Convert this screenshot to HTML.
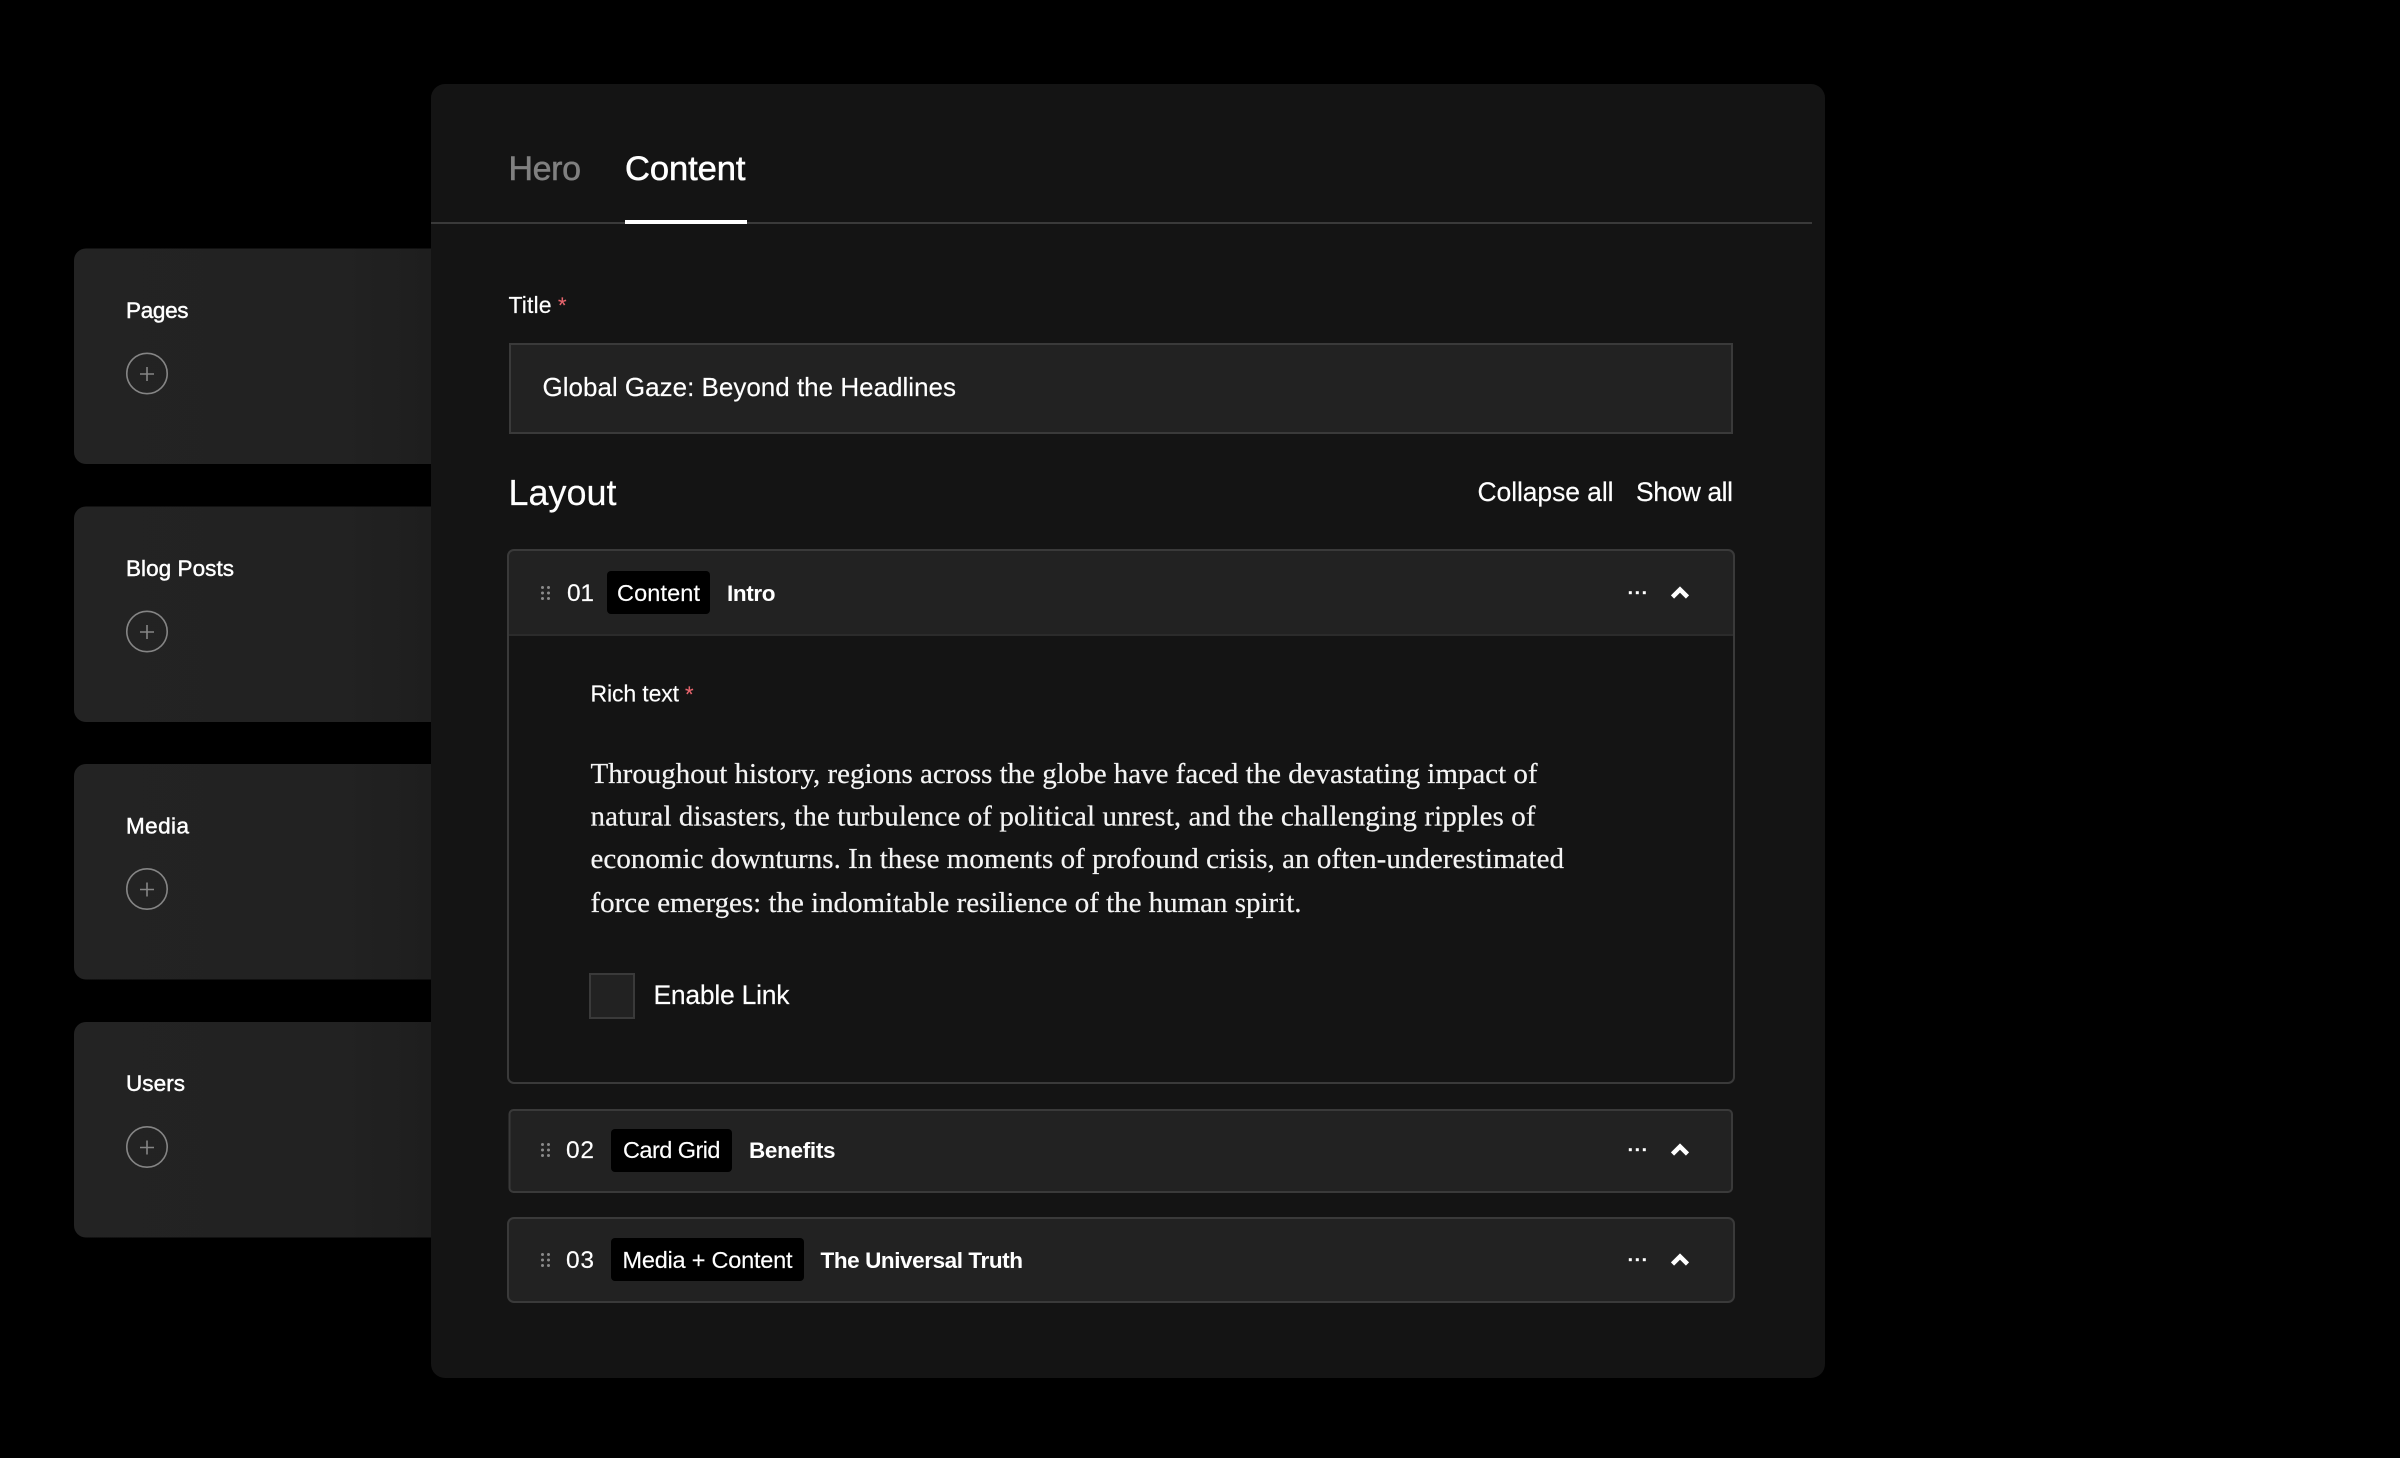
<!DOCTYPE html>
<html lang="en">
<head>
<meta charset="utf-8">
<title>Layout editor</title>
<style>
html,body{margin:0;padding:0;background:#000;width:2400px;height:1458px;overflow:hidden}
svg{display:block}
text{font-family:"Liberation Sans",Arial,sans-serif;fill:#fff;stroke:#fff;stroke-width:.15px}
.serif{font-family:"Liberation Serif",Georgia,serif;font-size:29px;fill:#f4f4f4;stroke:#f4f4f4;stroke-width:.2px}
.med{stroke:#fff;stroke-width:.45px}
.card{font-size:22.5px}
.num{font-size:24.5px}
.tag{font-size:23.5px}
.name{font-size:22.5px;font-weight:700;stroke-width:0}
.req{fill:#e8666e;stroke:#e8666e;font-size:22px}
.line{fill:none;stroke:#3a3a3a;stroke-width:2}
.grip{fill:#8a8a8a}
.dots{fill:#fff}
.chev{fill:none;stroke:#fff;stroke-width:4.5}
.plus{fill:none;stroke:#858585;stroke-width:1.6}
</style>
</head>
<body>
<svg width="2400" height="1458" viewBox="0 0 2400 1458" xmlns="http://www.w3.org/2000/svg">
<defs>
<linearGradient id="cg" x1="0" x2="1" y1="0" y2="0">
<stop offset="0" stop-color="#232323"/>
<stop offset=".7" stop-color="#222222"/>
<stop offset="1" stop-color="#1d1d1d"/>
</linearGradient>
<g id="plus">
<circle cx="147" cy="373.5" r="20.2" class="plus"/>
<path d="M140 374H154M147 367V381" class="plus"/>
</g>
</defs>

<rect width="2400" height="1458" fill="#000"/>

<!-- Side cards -->
<rect x="74" y="248.5" width="380" height="215.5" rx="12" fill="url(#cg)"/>
<rect x="74" y="506.5" width="380" height="215.5" rx="12" fill="url(#cg)"/>
<rect x="74" y="764" width="380" height="215.5" rx="12" fill="url(#cg)"/>
<rect x="74" y="1022" width="380" height="215.5" rx="12" fill="url(#cg)"/>
<text x="126" y="318" class="card med" textLength="62.5">Pages</text>
<text x="126" y="576" class="card med" textLength="108">Blog Posts</text>
<text x="126" y="833.5" class="card med" textLength="63">Media</text>
<text x="126" y="1091" class="card med" textLength="59">Users</text>
<use href="#plus"/>
<use href="#plus" y="258"/>
<use href="#plus" y="515.5"/>
<use href="#plus" y="773.5"/>

<!-- Main panel -->
<rect x="431" y="84" width="1394" height="1294" rx="14" fill="#141414"/>

<!-- Tabs -->
<text x="508.5" y="180" style="font-size:34px;fill:#808080;stroke:#808080;stroke-width:.5px" textLength="72.5">Hero</text>
<text x="625" y="180" style="font-size:34.5px;stroke-width:.55px" textLength="120.5">Content</text>
<rect x="431" y="222" width="1381" height="2" fill="#3a3a3a"/>
<rect x="625" y="220" width="122" height="4" fill="#fff"/>

<!-- Title -->
<text x="508.5" y="313" style="font-size:23px" textLength="43">Title</text>
<text x="558" y="313" class="req">*</text>
<rect x="510" y="344" width="1222" height="89" class="line" style="fill:#222222"/>
<text x="542.5" y="396" style="font-size:26px" textLength="413.5">Global Gaze: Beyond the Headlines</text>

<!-- Layout heading -->
<text x="508.5" y="505" style="font-size:36px" textLength="108">Layout</text>
<text x="1477.5" y="501" style="font-size:26.5px" textLength="136">Collapse all</text>
<text x="1636" y="501" style="font-size:26.5px" textLength="97">Show all</text>

<!-- Row 01 -->
<rect x="508" y="550" width="1226" height="533" rx="6" fill="#141414"/>
<path d="M508 634V556a6 6 0 0 1 6-6H1728a6 6 0 0 1 6 6V634Z" fill="#222222"/>
<rect x="509" y="634" width="1224" height="2" fill="#2b2b2b"/>
<rect x="508" y="550" width="1226" height="533" rx="6" class="line"/>
<g class="grip">
<circle cx="542.5" cy="587.5" r="1.5"/><circle cx="548.5" cy="587.5" r="1.5"/>
<circle cx="542.5" cy="593" r="1.5"/><circle cx="548.5" cy="593" r="1.5"/>
<circle cx="542.5" cy="598.5" r="1.5"/><circle cx="548.5" cy="598.5" r="1.5"/>
</g>
<text x="567" y="601" class="num" textLength="27">01</text>
<rect x="607" y="571" width="103" height="43" rx="4" fill="#000"/>
<text x="617" y="601" class="tag" textLength="83">Content</text>
<text x="727" y="601" class="name" textLength="48.5">Intro</text>
<g class="dots"><rect x="1628.8" y="591.2" width="3" height="3"/><rect x="1635.8" y="591.2" width="3" height="3"/><rect x="1642.8" y="591.2" width="3" height="3"/></g>
<path d="M1672.5 597L1680 589.5L1687.5 597" class="chev"/>

<!-- Rich text -->
<text x="590.5" y="701.5" style="font-size:23px" textLength="88.5">Rich text</text>
<text x="685" y="702" class="req">*</text>
<text x="590.5" y="783" class="serif" textLength="947">Throughout history, regions across the globe have faced the devastating impact of</text>
<text x="590.5" y="825.5" class="serif" textLength="945">natural disasters, the turbulence of political unrest, and the challenging ripples of</text>
<text x="590.5" y="868" class="serif" textLength="973.5">economic downturns. In these moments of profound crisis, an often-underestimated</text>
<text x="590.5" y="912" class="serif" textLength="711">force emerges: the indomitable resilience of the human spirit.</text>

<!-- Checkbox -->
<rect x="590" y="974" width="44" height="44" class="line" style="fill:#222222"/>
<text x="653.5" y="1004" style="font-size:26.5px" textLength="136">Enable Link</text>

<!-- Row 02 -->
<rect x="509.5" y="1110" width="1222.5" height="82" rx="4" class="line" style="fill:#222222"/>
<g class="grip">
<circle cx="542.5" cy="1144.5" r="1.5"/><circle cx="548.5" cy="1144.5" r="1.5"/>
<circle cx="542.5" cy="1150" r="1.5"/><circle cx="548.5" cy="1150" r="1.5"/>
<circle cx="542.5" cy="1155.5" r="1.5"/><circle cx="548.5" cy="1155.5" r="1.5"/>
</g>
<text x="566" y="1158" class="num" textLength="28">02</text>
<rect x="611" y="1129" width="121" height="43" rx="4" fill="#000"/>
<text x="623" y="1158" class="tag" textLength="97.5">Card Grid</text>
<text x="749" y="1158" class="name" textLength="86.5">Benefits</text>
<g class="dots"><rect x="1628.8" y="1148.2" width="3" height="3"/><rect x="1635.8" y="1148.2" width="3" height="3"/><rect x="1642.8" y="1148.2" width="3" height="3"/></g>
<path d="M1672.5 1154L1680 1146.5L1687.5 1154" class="chev"/>

<!-- Row 03 -->
<rect x="508" y="1218" width="1226" height="84" rx="6" class="line" style="fill:#222222"/>
<g class="grip">
<circle cx="542.5" cy="1254.5" r="1.5"/><circle cx="548.5" cy="1254.5" r="1.5"/>
<circle cx="542.5" cy="1260" r="1.5"/><circle cx="548.5" cy="1260" r="1.5"/>
<circle cx="542.5" cy="1265.5" r="1.5"/><circle cx="548.5" cy="1265.5" r="1.5"/>
</g>
<text x="566" y="1268" class="num" textLength="28">03</text>
<rect x="611" y="1238" width="193" height="43" rx="4" fill="#000"/>
<text x="622.5" y="1268" class="tag" textLength="170">Media + Content</text>
<text x="820.5" y="1268" class="name" textLength="202.5">The Universal Truth</text>
<g class="dots"><rect x="1628.8" y="1258.2" width="3" height="3"/><rect x="1635.8" y="1258.2" width="3" height="3"/><rect x="1642.8" y="1258.2" width="3" height="3"/></g>
<path d="M1672.5 1264L1680 1256.5L1687.5 1264" class="chev"/>
</svg>
</body>
</html>
